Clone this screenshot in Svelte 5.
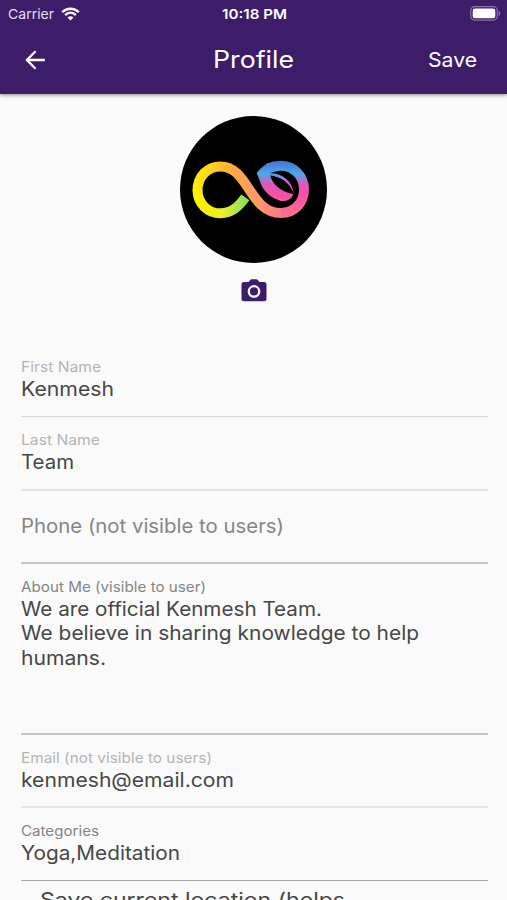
<script>
  const fields = [
    { label: 'First Name', lw: 80, lines: [['Kenmesh', 93]], height: 75, top: 14.5, tone: 'faint', rule: '#d9d9d9', thick: 1 },
    { label: 'Last Name', lw: 79, lines: [['Team', 53]], height: 74, tone: 'faint', rule: '#e3e3e3', thick: 2 },
    { placeholder: 'Phone (not visible to users)', pw: 263, height: 73, rule: '#c6c6c6', thick: 2 },
    {
      label: 'About Me (visible to user)',
      lw: 185,
      lines: [
        ['We are official Kenmesh Team.', 301],
        ['We believe in sharing knowledge to help', 398],
        ['humans.', 85]
      ],
      height: 171,
      rule: '#c6c6c6',
      thick: 2
    },
    { label: 'Email (not visible to users)', lw: 191, lines: [['kenmesh@email.com', 213]], height: 73, tone: 'faint', rule: '#e6e6e6', thick: 2 },
    { label: 'Categories', lw: 78, lines: [['Yoga,Meditation', 159]], height: 73, rule: '#a6a6a6', thick: 1 }
  ];

  // Widens a single line of text to the given width, keeping its height.
  function fit(node, width) {
    const natural = node.getBoundingClientRect().width;
    node.style.width = `${width}px`;
    node.style.textAlign = 'left';
    node.style.transform = `scaleX(${width / natural})`;
  }
</script>

<div class="screen">
  <header>
    <div class="status">
      <div class="carrier">
        <span use:fit={46}>Carrier</span>
        <svg width="19" height="14" viewBox="0 0 19 14" fill="none" stroke="#fff" stroke-width="2.5">
          <path d="M1.2 5.1C6 .5 13 .5 17.8 5.1" />
          <path d="M4.2 8.1c3.1-3 7.5-3 10.6 0" />
          <path d="M9.5 13.4 6.6 10.4c1.7-1.5 4.1-1.5 5.8 0z" fill="#fff" stroke="none" />
        </svg>
      </div>
      <strong><span use:fit={65}>10:18 PM</span></strong>
      <div class="power">
        <svg width="31" height="15" viewBox="0 0 31 15">
          <rect x=".7" y=".7" width="26.6" height="13.4" rx="4" fill="none" stroke="#8b74ab" stroke-width="1.2" />
          <rect x="2.7" y="2.6" width="22.6" height="9.6" rx="2.2" fill="#fff" />
          <path d="M28.7 5v5c2-.8 2-4.2 0-5z" fill="#8b74ab" />
        </svg>
      </div>
    </div>
    <div class="toolbar">
      <svg class="back" width="20" height="20" viewBox="0 0 20 20" fill="none" stroke="#fff" stroke-width="2.3">
        <path d="M19.8 10H2.2M10.6 1.3 1.900 10l8.700 8.700" />
      </svg>
      <h1><span use:fit={81}>Profile</span></h1>
      <div class="save"><span use:fit={49}>Save</span></div>
    </div>
  </header>

  <section class="portrait">
    <svg width="147" height="147" viewBox="20 16 441 441">
      <defs>
        <linearGradient id="warm" gradientUnits="userSpaceOnUse" x1="57" y1="0" x2="345" y2="0">
          <stop offset="0" stop-color="#fff000" />
          <stop offset=".22" stop-color="#ffd022" />
          <stop offset=".42" stop-color="#ffab3c" />
          <stop offset=".66" stop-color="#ff9b62" />
          <stop offset="1" stop-color="#f86f93" />
        </linearGradient>
        <linearGradient id="lime" gradientUnits="userSpaceOnUse" x1="80" y1="0" x2="218" y2="0">
          <stop offset="0" stop-color="#fff000" />
          <stop offset=".5" stop-color="#ecec28" />
          <stop offset="1" stop-color="#86e45c" />
        </linearGradient>
        <linearGradient id="cool" gradientUnits="userSpaceOnUse" x1="0" y1="150" x2="0" y2="322">
          <stop offset="0" stop-color="#4b6fd0" />
          <stop offset=".22" stop-color="#49a8ea" />
          <stop offset=".42" stop-color="#e156ba" />
          <stop offset=".6" stop-color="#fb4ea8" />
          <stop offset="1" stop-color="#f9778a" />
        </linearGradient>
      </defs>
      <circle cx="240.5" cy="236.5" r="220.5" />
      <g fill="none" stroke-width="30">
        <path d="M322 307C365 307 392 275 392 236S362 165 322 165C306 165 294 169 283 174" stroke="url(#cool)" />
        <path d="M72.5 238C72.5 278 103 308 142 308C176 308 197 286 216 260" stroke="url(#lime)" />
        <path d="M72.5 240C72.5 198 102 167.5 142 167.5C226 167.5 228 307 323 307" stroke="url(#warm)" />
      </g>
      <g fill="url(#cool)">
        <path d="M250 187C258 175 270 164 288 156L306 179C298 182 290 186 286 192L264 202Z" />
        <path d="M250 187C268 184 282 186 290 193C298 222 322 243 360 250C356 266 340 273 323 271C290 262 270 240 262 218C258 206 254 197 250 187Z" />
        <path d="M284 188C322 185 356 206 361 248C349 216 322 197 284 194Z" />
      </g>
    </svg>
    <svg class="camera" width="26" height="24" viewBox="0 0 26 24">
      <path d="M3 3h4.700L9.400.8Q10 .2 10.800.2h4.400q.8 0 1.400.6L18.300 3H23q2.500 0 2.500 2.500v14.200q0 2.500-2.500 2.500H3Q.5 22.200.5 19.700V5.500Q.5 3 3 3z" fill="#3d1c69" />
      <circle cx="13" cy="12.400" r="5.200" fill="none" stroke="#fafafa" stroke-width="2.300" />
    </svg>
  </section>

  <main>
    {#each fields as f}
      <div
        class="field"
        style="height: {f.height}px; padding-top: {f.top ?? 12.5}px; border-bottom: {f.thick}px solid {f.rule}"
      >
        {#if f.placeholder}
          <div class="placeholder"><span use:fit={f.pw}>{f.placeholder}</span></div>
        {:else}
          <div class="label {f.tone ?? ''}"><span use:fit={f.lw}>{f.label}</span></div>
          {#each f.lines as [text, width]}
            <div class="value"><span use:fit={width}>{text}</span></div>
          {/each}
        {/if}
      </div>
    {/each}
    <div class="location"><span use:fit={305}>Save current location (helps</span></div>
  </main>
</div>

<style>
  :global(body) {
    background: #fafafa;
  }
  .screen {
    width: 507px;
    height: 900px;
    overflow: hidden;
    display: flex;
    flex-direction: column;
    background: #fafafa;
    color: #464646;
    font-family: Inter, 'Open Sans', sans-serif;
  }
  span {
    display: inline-block;
    white-space: nowrap;
    transform-origin: left center;
  }
  svg {
    display: block;
    flex: none;
  }
  header {
    flex: none;
    height: 94px;
    box-sizing: border-box;
    background: #3d1c69;
    color: #fff;
    box-shadow: 0 1px 4px rgba(0, 0, 0, 0.45);
  }
  .status {
    height: 27px;
    display: grid;
    grid-template-columns: 1fr auto 1fr;
    align-items: center;
    padding: 0 6px 0 8px;
    font-size: 13.5px;
  }
  .carrier {
    display: flex;
    align-items: center;
    gap: 7px;
    color: #e6dff0;
  }
  .status strong {
    font-weight: 600;
  }
  .power {
    display: flex;
    justify-content: flex-end;
  }
  .toolbar {
    height: 66px;
    display: grid;
    grid-template-columns: 1fr auto 1fr;
    align-items: center;
    padding: 0 25px;
  }
  h1 {
    margin: 0;
    font-size: 24px;
    font-weight: 400;
    line-height: 30px;
  }
  .save {
    padding-right: 5px;
    text-align: right;
    font-size: 20px;
    font-weight: 400;
  }
  .portrait {
    flex: none;
    height: 248px;
    box-sizing: border-box;
    padding-top: 21.5px;
    display: flex;
    flex-direction: column;
    align-items: center;
  }
  .camera {
    margin-top: 16px;
  }
  main {
    flex: none;
    padding: 0 19px 0 20.5px;
  }
  .field {
    box-sizing: border-box;
  }
  .label {
    height: 20px;
    font-size: 14.2px;
    line-height: 20px;
    color: #858585;
  }
  .faint {
    color: #b4b4b4;
  }
  .value,
  .placeholder {
    height: 24.5px;
    font-size: 19.5px;
    line-height: 24.5px;
  }
  .placeholder {
    padding-top: 10px;
    color: #858585;
  }
  .location {
    padding: 7px 0 0 19.5px;
    font-size: 20px;
    line-height: 25px;
  }
</style>
